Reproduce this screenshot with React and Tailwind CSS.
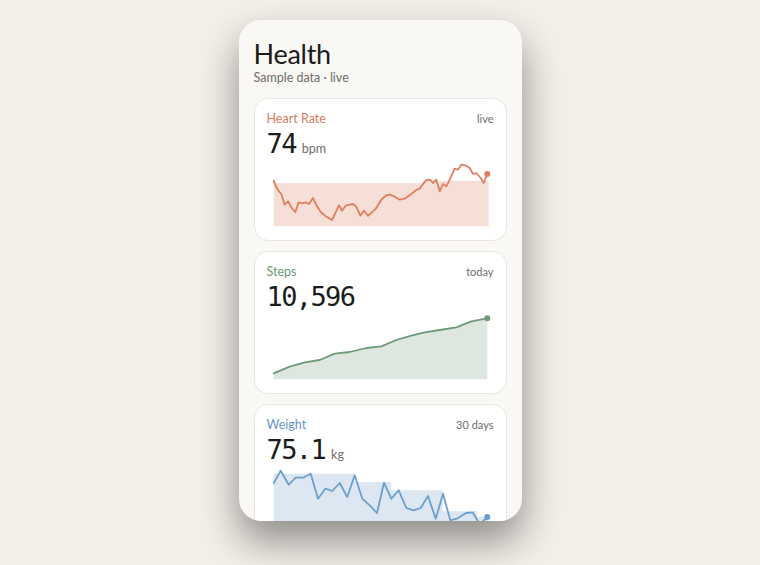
import React from 'react';

const sans = { fontFamily: '"Lato", "Liberation Sans", sans-serif' };
const mono = { fontFamily: '"DejaVu Sans Mono", "Liberation Mono", monospace' };

const toPath = (pts) => pts.map((p, i) => `${i === 0 ? 'M' : 'L'}${p[0]} ${p[1]}`).join(' ');

const heartLine = [
  [6.7, 22.7], [9.3, 29.3], [12, 33.3], [14.3, 36], [17.7, 46.7], [21, 43.3], [24.3, 49.3],
  [28.3, 54.3], [31.7, 44.3], [35.3, 45.3], [38.7, 44.3], [42, 46], [46, 40], [50, 48.3],
  [54, 54.3], [58.7, 58.3], [65, 62], [72, 47.3], [75, 52.7], [78.7, 47.7], [86, 46],
  [89.3, 48.7], [93.3, 57.7], [97, 52.7], [101, 57.7], [106, 53.3], [109.3, 50], [114.3, 41.7],
  [119.3, 37.3], [122.7, 36.7], [127.7, 38.7], [132.7, 41.7], [137.7, 40.7], [144.3, 36],
  [149.3, 32], [152.7, 30.7], [156.7, 25], [160, 21.7], [163.3, 22], [166, 25], [169.3, 21.7],
  [172.7, 33.3], [176, 26], [179.3, 28.3], [182.7, 21.7], [187.7, 10.7], [191, 11.7],
  [194.3, 6.7], [199.3, 7.7], [202.7, 10], [206, 16], [209.3, 15], [213.7, 20], [216.7, 25],
  [220.3, 16],
];
const heartFill = [[6.7, 25], [156, 25], [156, 22.7], [221.7, 22.7], [221.7, 68.3], [6.7, 68.3]];

const stepsLine = [
  [6.7, 62.3], [22.7, 55.7], [37.7, 51.3], [52.7, 49], [67.7, 42.7], [82.7, 41], [99.3, 37],
  [114.3, 35.3], [129.3, 29], [144.3, 24.7], [157.7, 21.3], [172.7, 19], [189.3, 16.3],
  [204.3, 10.3], [220.3, 7.3],
];
const stepsFill = [...stepsLine, [220.3, 68.3], [6.7, 68.3]];

const weightLine = [
  [6.7, 19], [13.7, 6.7], [21.7, 20.7], [28.7, 13.7], [36, 13.7], [43.7, 9.7], [51, 34.7],
  [58.3, 24.7], [65.3, 27], [72.7, 19], [80.3, 33], [87.7, 11.3], [95.3, 34.7], [102.7, 41.3],
  [110, 49], [117, 18.7], [124.3, 34.7], [131.7, 26.3], [139.3, 44], [146.7, 46.3], [153.7, 44],
  [161, 32], [168.7, 54.7], [176, 29.7], [183.3, 56.3], [190.7, 54.3], [199, 49], [205.7, 48.3],
  [210, 55.7], [213, 60], [220.3, 53],
];
const weightFill = [
  [6.7, 9.7], [87.7, 9.7], [87.7, 18], [124.3, 18], [124.3, 26.3], [175.7, 26.3], [175.7, 47.3],
  [210, 47.3], [210, 52.7], [221.7, 52.7], [221.7, 68.3], [6.7, 68.3],
];

const metrics = [
  {
    id: 'heart', label: 'Heart Rate', note: 'live', value: '74', unit: 'bpm',
    labelClass: 'text-[#d77a5d]', line: '#e07f5e', fill: '#f6dfd6',
    linePts: heartLine, fillPts: heartFill,
  },
  {
    id: 'steps', label: 'Steps', note: 'today', value: '10,596', unit: '',
    labelClass: 'text-[#6b9878]', line: '#6d9a79', fill: '#dde7df',
    linePts: stepsLine, fillPts: stepsFill,
  },
  {
    id: 'weight', label: 'Weight', note: '30 days', value: '75.1', unit: 'kg',
    labelClass: 'text-[#6496c4]', line: '#6b9fcd', fill: '#dce7f1',
    linePts: weightLine, fillPts: weightFill,
  },
];

const MetricCard = ({ m }) => {
  const last = m.linePts[m.linePts.length - 1];
  return (
    <div className="shrink-0 bg-white border border-[#e9e6df] rounded-[14px] px-3 pt-3 pb-3">
      <div className="flex items-center justify-between h-4">
        <span className={`text-[12.5px] leading-4 ${m.labelClass}`}>{m.label}</span>
        <span className="text-[11px] leading-4 text-[#6f6d68]">{m.note}</span>
      </div>
      <div className="flex items-baseline gap-1.5 mt-[3px] h-7">
        <span className="text-[27px] leading-7 tracking-[-0.06em] text-[#1c1c1c]" style={mono}>{m.value}</span>
        {m.unit && <span className="text-[12.5px] text-[#6f6d68]">{m.unit}</span>}
      </div>
      <svg width="227" height="70" viewBox="0 0 227 70" className="block">
        <path d={toPath(m.fillPts) + ' Z'} fill={m.fill} />
        <path d={toPath(m.linePts)} fill="none" stroke={m.line} strokeWidth="1.8" strokeLinejoin="round" strokeLinecap="round" />
        <circle cx={last[0]} cy={last[1]} r="3" fill={m.line} />
      </svg>
    </div>
  );
};

export default function App() {
  return (
    <div className="min-h-[565px] bg-[#f3efe9] flex justify-center pt-5" style={sans}>
      <div className="w-[283px] h-[501px] bg-[#f9f8f5] rounded-[22px] overflow-hidden shadow-[0_20px_40px_rgba(0,0,0,0.42)] px-[15px] pt-[18px]">
        <h1 className="text-[27px] leading-[32px] tracking-[-0.01em] text-[#1b1b1b]">Health</h1>
        <p className="text-[12.5px] leading-[15px] text-[#6f6d68]">Sample data · live</p>
        <div className="mt-[13px] flex flex-col gap-[10px]">
          {metrics.map((m) => (
            <MetricCard key={m.id} m={m} />
          ))}
        </div>
      </div>
    </div>
  );
}
